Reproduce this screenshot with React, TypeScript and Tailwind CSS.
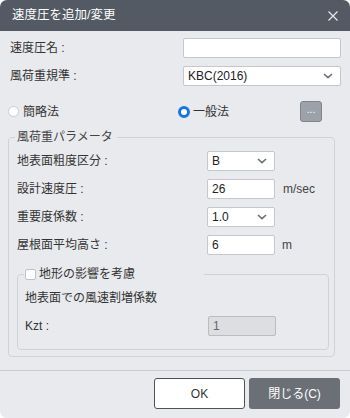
import React from "react";

const font = { fontFamily: '"Liberation Sans", "Noto Sans CJK JP", sans-serif' };

function Chevron() {
  return (
    <svg width="10" height="6" viewBox="0 0 10 6" className="shrink-0">
      <path d="M1 1 L5 4.6 L9 1" fill="none" stroke="#6b6f75" strokeWidth="1.6" />
    </svg>
  );
}

function Select({ value, w }: { value: string; w: string }) {
  return (
    <div className={`${w} h-[20px] bg-white border border-[#c4c7cc] rounded-[2px] flex items-center justify-between pl-[4px] pr-[7px] text-[12px] text-[#222]`}>
      <span>{value}</span>
      <Chevron />
    </div>
  );
}

function Input({ value, w, disabled }: { value: string; w: string; disabled?: boolean }) {
  return (
    <div
      className={`${w} h-[20px] border rounded-[2px] flex items-center pl-[4px] text-[12px] ${
        disabled ? "bg-[#dcdee2] border-[#b9bdc2] text-[#666]" : "bg-white border-[#c4c7cc] text-[#222]"
      }`}
    >
      {value}
    </div>
  );
}

function Row({ label, children }: { label: string; children: React.ReactNode }) {
  return (
    <div className="flex items-center h-[20px]">
      <div className="w-[190px] text-[12px] text-[#333]">{label}</div>
      {children}
    </div>
  );
}

export default function App() {
  return (
    <div className="w-[350px] h-[418px] bg-white" style={font}>
      <div className="w-[350px] h-[418px] rounded-[7px] overflow-hidden bg-[#e9eaee] flex flex-col">
        <div className="h-[31px] bg-[#535a63] flex items-center justify-between pl-[12px] pr-[12px] shrink-0">
          <span className="text-[12.5px] text-white">速度圧を追加/変更</span>
          <svg width="10" height="10" viewBox="0 0 10 10">
            <path d="M0.5 0.5 L9.5 9.5 M9.5 0.5 L0.5 9.5" stroke="#e8e9eb" strokeWidth="1.2" />
          </svg>
        </div>

        <div className="flex-1 pt-[7px] pl-[8px] pr-[9px]">
          <div className="flex items-center justify-between h-[20px] pl-[2px]">
            <span className="text-[12px] text-[#333]">速度圧名 :</span>
            <div className="w-[158px] h-[20px] bg-white border border-[#c4c7cc] rounded-[2px]" />
          </div>
          <div className="flex items-center justify-between h-[20px] pl-[2px] mt-[8px]">
            <span className="text-[12px] text-[#333]">風荷重規準 :</span>
            <Select value="KBC(2016)" w="w-[158px]" />
          </div>

          <div className="flex items-center h-[21px] mt-[15px]">
            <div className="w-[170px] flex items-center">
              <span className="w-[11px] h-[11px] rounded-full bg-white border border-[#c9ccd1] shrink-0" />
              <span className="ml-[4px] text-[12px] text-[#333]">簡略法</span>
            </div>
            <div className="w-[122px] flex items-center">
              <span className="w-[12px] h-[12px] rounded-full bg-white border-[3px] border-[#1a73e8] shrink-0" />
              <span className="ml-[3px] text-[12px] text-[#333]">一般法</span>
            </div>
            <div className="w-[22px] h-[21px] bg-[#9da2aa] border border-[#80858c] rounded-[3px] flex items-center justify-center text-white text-[10px] leading-none pb-[3px]">
              ...
            </div>
          </div>

          <fieldset className="mt-[7px] w-[326px] border border-[#cfd2d6] rounded-[4px] pl-[8px] pr-[5px] pb-[6px]">
            <legend className="-ml-[2px] px-[2px] pr-[4px] text-[12px] leading-[16px] text-[#444]">風荷重パラメータ</legend>
            <div className="flex flex-col gap-[8px] pt-[6px]">
              <Row label="地表面粗度区分 :">
                <Select value="B" w="w-[68px]" />
              </Row>
              <Row label="設計速度圧 :">
                <Input value="26" w="w-[68px]" />
                <span className="ml-[8px] text-[12px] text-[#444]">m/sec</span>
              </Row>
              <Row label="重要度係数 :">
                <Select value="1.0" w="w-[68px]" />
              </Row>
              <Row label="屋根面平均高さ :">
                <Input value="6" w="w-[68px]" />
                <span className="ml-[7px] text-[12px] text-[#444]">m</span>
              </Row>
            </div>

            <fieldset className="mt-[11px] w-[312px] border border-[#cfd2d6] rounded-[4px] pl-[7px] pb-[13px]">
              <legend className="-ml-[1px] w-[180px] pl-[1px] text-[12px] leading-[16px] text-[#333] flex items-center">
                <span className="w-[11px] h-[11px] bg-white border border-[#bfc2c7] rounded-[2px] shrink-0" />
                <span className="ml-[3px]">地形の影響を考慮</span>
              </legend>
              <div className="pt-[8px] text-[12px] leading-[16px] text-[#333]">地表面での風速割増係数</div>
              <div className="flex items-center h-[20px] mt-[10px]">
                <div className="w-[183px] text-[12px] text-[#333]">Kzt :</div>
                <Input value="1" w="w-[68px]" disabled />
              </div>
            </fieldset>
          </fieldset>
        </div>

        <div className="shrink-0 border-t border-[#c7cacf] pt-[7px] pb-[9px] pr-[10px] flex justify-end gap-[4px]">
          <div className="w-[91px] h-[31px] bg-white border border-[#4d5259] rounded-[3px] flex items-center justify-center text-[12px] text-[#333]">
            OK
          </div>
          <div className="w-[91px] h-[31px] bg-[#6b7077] rounded-[3px] flex items-center justify-center text-[12px] text-white">
            閉じる(C)
          </div>
        </div>
      </div>
    </div>
  );
}
